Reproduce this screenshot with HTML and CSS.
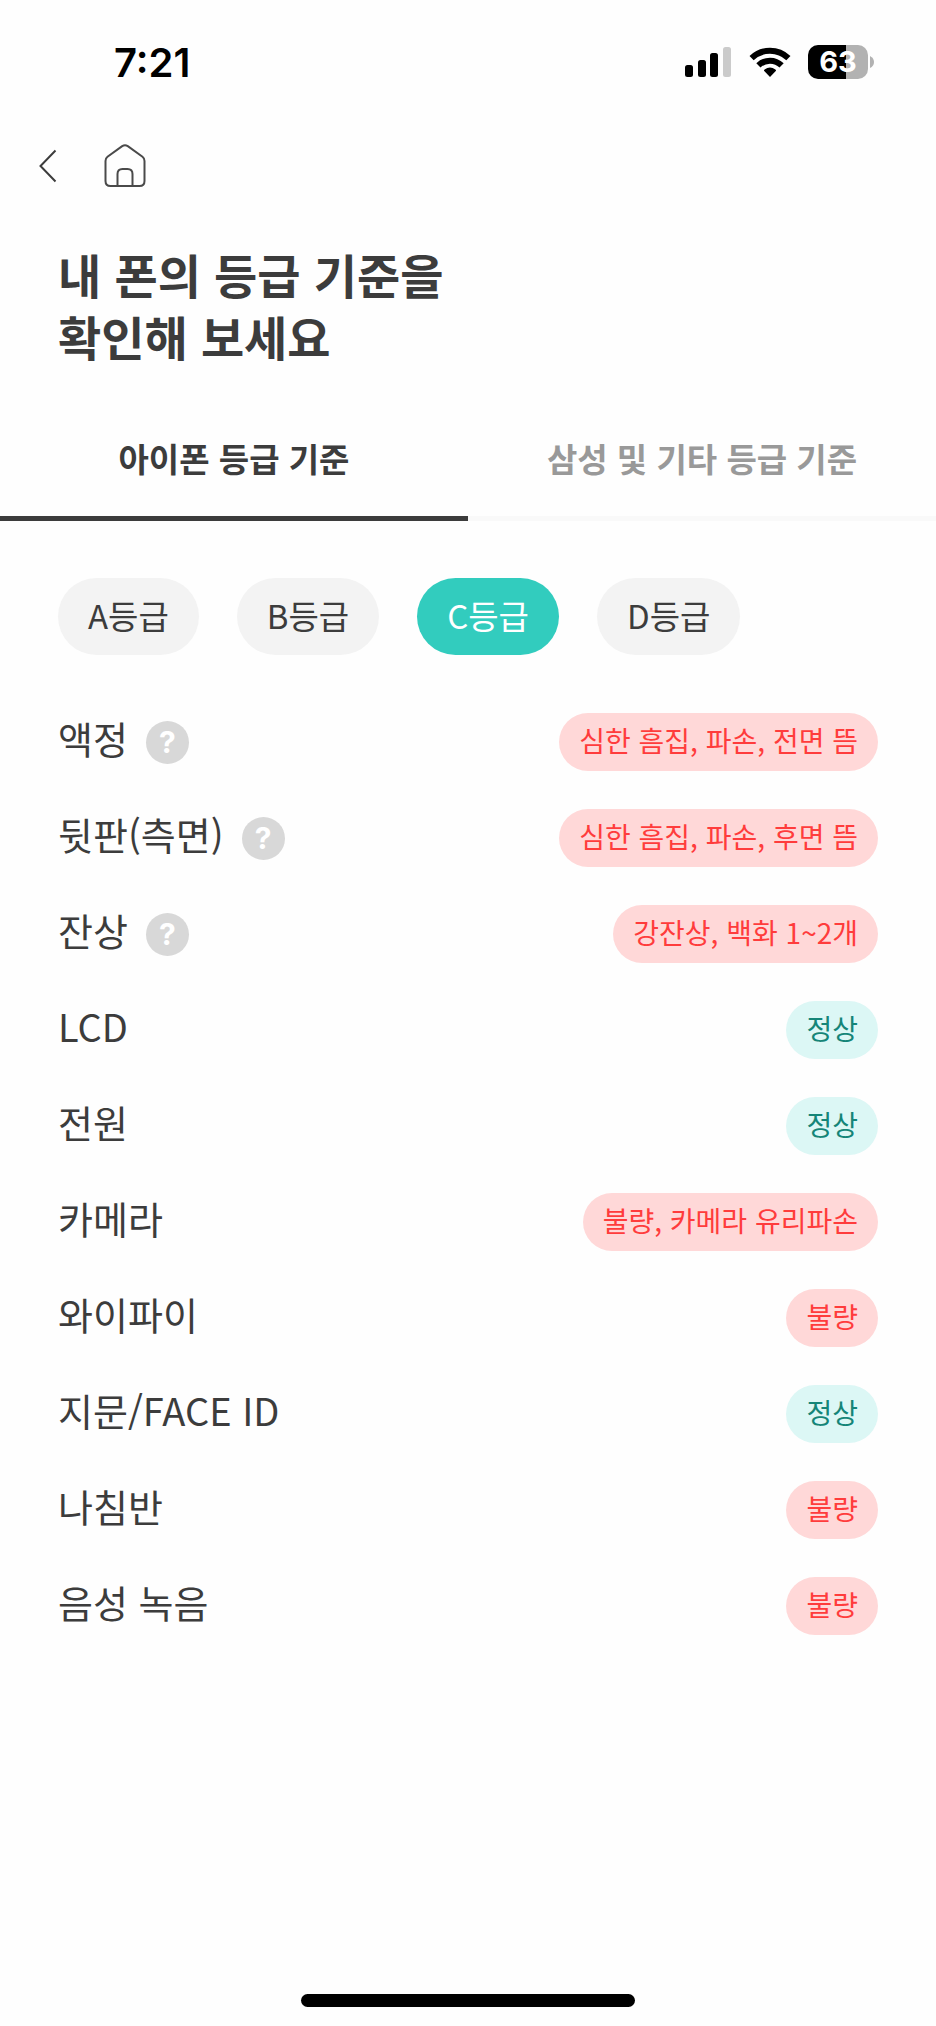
FILE: index.html
```html
<!DOCTYPE html>
<html lang="ko">
<head>
<meta charset="utf-8">
<meta name="viewport" content="width=device-width, initial-scale=1">
<title>등급 기준</title>
<link rel="stylesheet" href="styles.css">
</head>
<body>
<div class="statusbar">
    <span class="time">7:21</span>
    <div class="status-icons">
        <svg width="47" height="30" viewBox="0 0 47 30">
            <rect x="0" y="18" width="8" height="12" rx="2.5"/>
            <rect x="13" y="13" width="8" height="17" rx="2.5"/>
            <rect x="25" y="6" width="8" height="24" rx="2.5"/>
            <rect x="38" y="0" width="8" height="30" rx="2.5" fill="#cbcbcb"/>
        </svg>
        <svg width="42" height="30" viewBox="0 0 42 30">
            <g fill="none" stroke="#000" stroke-width="6">
                <path d="M2.6 11.2A26.5 26.5 0 0 1 39.4 11.2"/>
                <path d="M9.4 18.4A16.6 16.6 0 0 1 32.6 18.4"/>
            </g>
            <path d="M21 30L15 23.8Q14.700 23 15.600 22.400Q21 18.600 26.400 22.400Q27.300 23 27 23.800Z"/>
        </svg>
        <div class="battery">
            <div class="battery-body">63</div>
            <svg width="4" height="12" viewBox="0 0 4 12"><path d="M0 0Q4 2 4 6Q4 10 0 12Z" fill="#b2b2b2"/></svg>
        </div>
    </div>
</div>

<div class="topnav">
    <a href="#" class="back" aria-label="뒤로">
        <svg width="18" height="34" viewBox="0 0 18 34"><path d="M16.500 1.500L1.500 17L16.500 32.500" fill="none" stroke="#3c3c3c" stroke-width="2"/></svg>
    </a>
    <a href="#" class="home" aria-label="홈">
        <svg width="42" height="44" viewBox="0 0 42 44">
            <g fill="none" stroke="#4a4a4a" stroke-width="2">
                <path d="M18.200 2.200Q21 .4 23.800 2.200L38.500 12.800Q40.500 14.300 40.500 17V37Q40.500 42 35.500 42H6.500Q1.500 42 1.500 37V17Q1.500 14.300 3.500 12.800Z"/>
                <path d="M13.500 42V30Q13.500 25 18.500 25H23.500Q28.500 25 28.500 30V42"/>
            </g>
        </svg>
    </a>
</div>

<h1 class="heading">내 폰의 등급 기준을<br>확인해 보세요</h1>

<div class="tabs">
    <button class="tab active">아이폰 등급 기준</button>
    <button class="tab">삼성 및 기타 등급 기준</button>
</div>

<div class="grades">
    <button class="grade">A등급</button>
    <button class="grade">B등급</button>
    <button class="grade active">C등급</button>
    <button class="grade">D등급</button>
</div>

<ul class="list">
    <li>
        <span class="name">액정</span>
        <button class="help" aria-label="액정 도움말">?</button>
        <span class="badge bad">심한 흠집, 파손, 전면 뜸</span>
    </li>
    <li>
        <span class="name">뒷판(측면)</span>
        <button class="help" aria-label="뒷판 도움말">?</button>
        <span class="badge bad">심한 흠집, 파손, 후면 뜸</span>
    </li>
    <li>
        <span class="name">잔상</span>
        <button class="help" aria-label="잔상 도움말">?</button>
        <span class="badge bad">강잔상, 백화 1~2개</span>
    </li>
    <li>
        <span class="name">LCD</span>
        <span class="badge good">정상</span>
    </li>
    <li>
        <span class="name">전원</span>
        <span class="badge good">정상</span>
    </li>
    <li>
        <span class="name">카메라</span>
        <span class="badge bad">불량, 카메라 유리파손</span>
    </li>
    <li>
        <span class="name">와이파이</span>
        <span class="badge bad">불량</span>
    </li>
    <li>
        <span class="name">지문/FACE ID</span>
        <span class="badge good">정상</span>
    </li>
    <li>
        <span class="name">나침반</span>
        <span class="badge bad">불량</span>
    </li>
    <li>
        <span class="name">음성 녹음</span>
        <span class="badge bad">불량</span>
    </li>
</ul>

<div class="home-bar"></div>
</body>
</html>
```

FILE: styles.css
```css
* {
  box-sizing: border-box;
}
body {
  margin: 0;
  min-height: 100vh;
  display: flex;
  flex-direction: column;
  background: #fefefe;
  color: #3c3c3c;
  font-family: "Noto Sans CJK KR", sans-serif;
}
button {
  border: none;
  padding: 0;
  background: none;
  color: inherit;
  font-family: inherit;
  cursor: pointer;
}
svg {
  display: block;
}

.statusbar {
  display: flex;
  justify-content: space-between;
  align-items: center;
  height: 124px;
  padding: 0 62px 0 114px;
  color: #000;
  font-family: Inter, sans-serif;
}
.time {
  font-size: 40px;
  font-weight: 600;
}
.status-icons {
  display: flex;
  align-items: center;
  gap: 17px;
}
.battery {
  display: flex;
  align-items: center;
  gap: 2px;
}
.battery-body {
  width: 60px;
  height: 34px;
  border-radius: 10px;
  background: linear-gradient(to right, #000 63%, #b2b2b2 63%);
  color: #fff;
  font-size: 29px;
  font-weight: 700;
  line-height: 34px;
  text-align: center;
}

.topnav {
  display: flex;
  align-items: center;
  gap: 47px;
  height: 84px;
  padding: 0 39px;
}

.heading {
  margin: 0;
  padding: 35px 58px 0;
  font-size: 47px;
  font-weight: 700;
  line-height: 62px;
}

.tabs {
  display: flex;
  margin-top: 29px;
}
.tab {
  flex: 1;
  height: 125px;
  padding-top: 4px;
  border-bottom: 5px solid #f9f9f9;
  color: #999;
  font-size: 33px;
  font-weight: 700;
}
.tab.active {
  border-color: #3c3c3c;
  color: #3c3c3c;
}

.grades {
  display: flex;
  gap: 38px;
  padding: 57px 58px 0;
}
.grade {
  height: 77px;
  padding: 0 30px 4px;
  border-radius: 39px;
  background: #f3f3f3;
  font-size: 33px;
}
.grade.active {
  background: #32ccbe;
  color: #fff;
}

.list {
  list-style: none;
  margin: 39px 0 0;
  padding: 0 58px;
}
.list li {
  display: flex;
  align-items: center;
  height: 96px;
}
.name {
  font-size: 38px;
  line-height: 56px;
  padding-bottom: 8px;
}
.help {
  width: 43px;
  height: 43px;
  margin-left: 18px;
  border-radius: 50%;
  background: #d8d8d8;
  color: #fff;
  font-family: Inter, sans-serif;
  font-size: 30px;
  font-weight: 700;
  line-height: 43px;
}
.badge {
  margin-left: auto;
  padding: 0 20px 4px;
  border-radius: 29px;
  font-size: 28px;
  line-height: 54px;
}
.bad {
  background: #ffd8d8;
  color: #ff3c3c;
}
.good {
  background: #dcf7f5;
  color: #158578;
}

.home-bar {
  width: 334px;
  height: 13px;
  margin: auto auto 19px;
  border-radius: 7px;
  background: #000;
}
```
